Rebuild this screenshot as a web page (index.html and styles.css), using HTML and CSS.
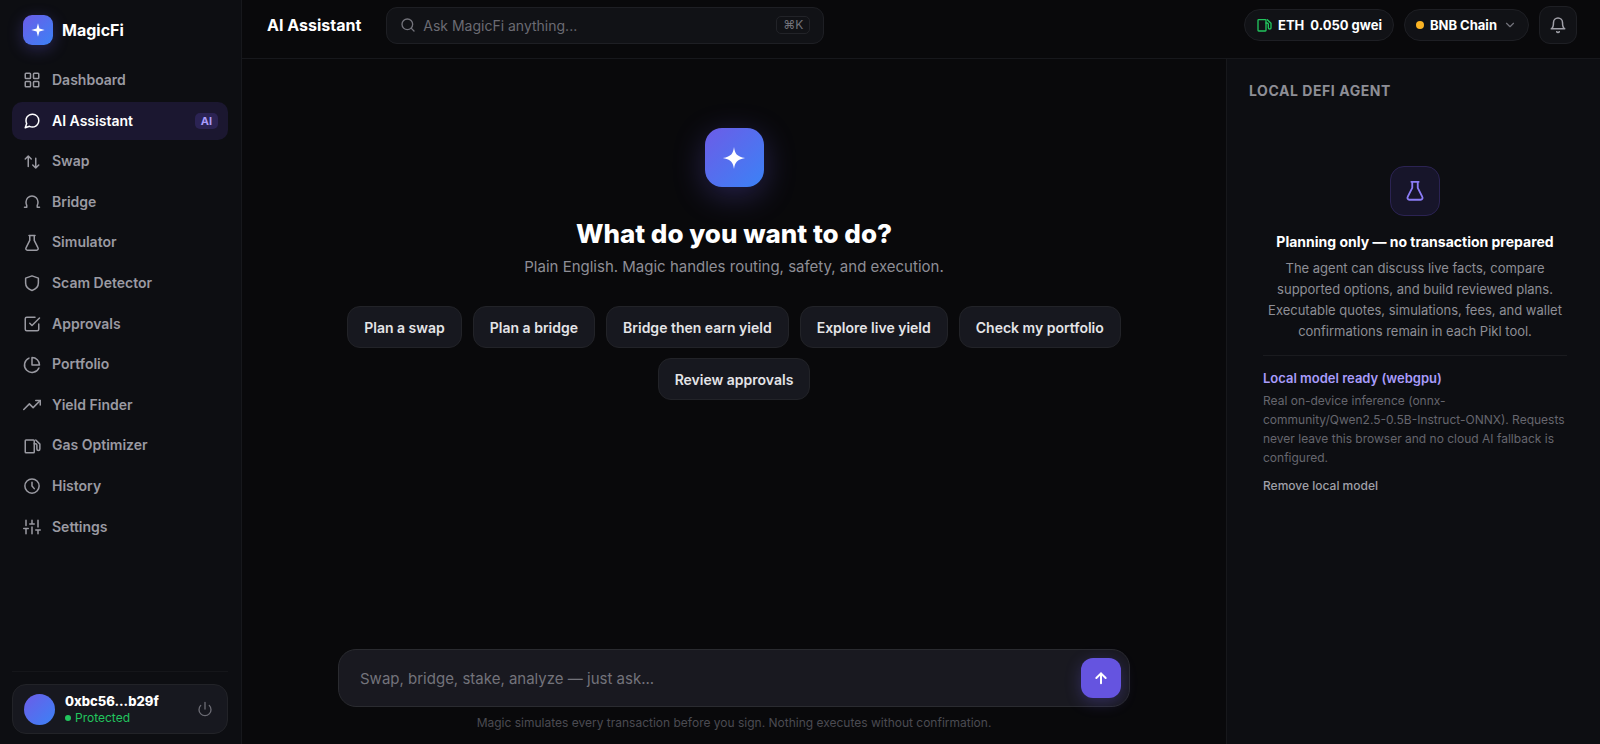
FILE: index.html
```html
<!DOCTYPE html>
<html lang="en">

<head>
    <meta charset="UTF-8">
    <meta name="viewport" content="width=device-width, initial-scale=1.0">
    <title>MagicFi - AI Assistant</title>
    <link rel="stylesheet" href="styles.css">
</head>

<body>
    <div class="app">
        <!-- Sidebar -->
        <aside class="sidebar">
            <a class="brand" href="#">
                <span class="brand-logo">
                    <svg width="16" height="16" viewBox="0 0 24 24" fill="currentColor"><path d="M12 2l2.1 7.9L22 12l-7.9 2.1L12 22l-2.1-7.9L2 12l7.9-2.1z"/></svg>
                </span>
                MagicFi
            </a>

            <nav class="nav">
                <a class="nav-item" href="#">
                    <svg class="icon" viewBox="0 0 24 24"><rect x="3" y="3" width="7" height="7" rx="1"/><rect x="14" y="3" width="7" height="7" rx="1"/><rect x="3" y="14" width="7" height="7" rx="1"/><rect x="14" y="14" width="7" height="7" rx="1"/></svg>
                    Dashboard
                </a>
                <a class="nav-item active" href="#">
                    <svg class="icon" viewBox="0 0 24 24"><path d="M21 11.5a8.4 8.4 0 0 1-.9 3.8 8.5 8.5 0 0 1-7.6 4.7 8.4 8.4 0 0 1-3.8-.9L3 21l1.9-5.7a8.4 8.4 0 0 1-.9-3.8 8.5 8.5 0 0 1 4.7-7.6 8.4 8.4 0 0 1 3.8-.9h.5a8.5 8.5 0 0 1 8 8z"/></svg>
                    AI Assistant
                    <span class="nav-badge">AI</span>
                </a>
                <a class="nav-item" href="#">
                    <svg class="icon" viewBox="0 0 24 24"><path d="M7 18V4M3 8l4-4 4 4M17 7v13M13 16l4 4 4-4"/></svg>
                    Swap
                </a>
                <a class="nav-item" href="#">
                    <svg class="icon" viewBox="0 0 24 24"><path d="M2 19h3v-2.500c-.8-1.500-1-3-1-4.500a8 8 0 0 1 16 0c0 1.500-.2 3-1 4.500V19h3"/></svg>
                    Bridge
                </a>
                <a class="nav-item" href="#">
                    <svg class="icon" viewBox="0 0 24 24"><path d="M9 2v6.500L4 18.500A2 2 0 0 0 5.800 21.500h12.400a2 2 0 0 0 1.800-3L15 8.500V2M8 2h8"/></svg>
                    Simulator
                </a>
                <a class="nav-item" href="#">
                    <svg class="icon" viewBox="0 0 24 24"><path d="M12 2.500l8.500 3v6.500c0 5-3.500 8.300-8.500 10-5-1.700-8.500-5-8.500-10V5.500z"/></svg>
                    Scam Detector
                </a>
                <a class="nav-item" href="#">
                    <svg class="icon" viewBox="0 0 24 24"><path d="M9 11l3 3L22 4"/><path d="M21 12v7a2 2 0 0 1-2 2H5a2 2 0 0 1-2-2V5a2 2 0 0 1 2-2h11"/></svg>
                    Approvals
                </a>
                <a class="nav-item" href="#">
                    <svg class="icon" viewBox="0 0 24 24"><path d="M21.200 15.900A10 10 0 1 1 8 2.800"/><path d="M22 12A10 10 0 0 0 12 2v10z"/></svg>
                    Portfolio
                </a>
                <a class="nav-item" href="#">
                    <svg class="icon" viewBox="0 0 24 24"><path d="M23 6l-9.500 9.500-5-5L1 18"/><path d="M17 6h6v6"/></svg>
                    Yield Finder
                </a>
                <a class="nav-item" href="#">
                    <svg class="icon" viewBox="0 0 24 24"><rect x="3" y="4" width="12" height="17" rx="1"/><path d="M15 9h1.500a2 2 0 0 1 2 2v5a2 2 0 0 0 4 0v-6.500L17 4"/></svg>
                    Gas Optimizer
                </a>
                <a class="nav-item" href="#">
                    <svg class="icon" viewBox="0 0 24 24"><circle cx="12" cy="12" r="9.500"/><path d="M12 7v5l3 3.500"/></svg>
                    History
                </a>
                <a class="nav-item" href="#">
                    <svg class="icon" viewBox="0 0 24 24"><path d="M4 21v-7M4 10V3M12 21v-9M12 8V3M20 21v-5M20 12V3M1 14h6M9 8h6M17 16h6"/></svg>
                    Settings
                </a>
            </nav>

            <!-- Connected wallet -->
            <div class="sidebar-footer">
                <div class="wallet">
                    <span class="avatar"></span>
                    <div class="wallet-info">
                        <div class="wallet-address">0xbc56...b29f</div>
                        <div class="wallet-status"><span class="status-dot"></span>Protected</div>
                    </div>
                    <button class="power-button" type="button" aria-label="Disconnect">
                        <svg class="icon icon-small" viewBox="0 0 24 24"><path d="M18.400 6.600a9 9 0 1 1-12.800 0M12 2v10"/></svg>
                    </button>
                </div>
            </div>
        </aside>

        <div class="main">
            <!-- Top bar -->
            <header class="topbar">
                <h1 class="page-title">AI Assistant</h1>
                <label class="search">
                    <svg class="icon icon-small" viewBox="0 0 24 24"><circle cx="11" cy="11" r="8"/><path d="M21 21l-4.300-4.300"/></svg>
                    <input class="search-input" type="text" placeholder="Ask MagicFi anything..." aria-label="Search">
                    <kbd class="shortcut">⌘K</kbd>
                </label>
                <div class="topbar-actions">
                    <button class="pill" type="button">
                        <svg class="icon icon-small gas-icon" viewBox="0 0 24 24"><rect x="3" y="4" width="12" height="17" rx="1"/><path d="M15 9h1.500a2 2 0 0 1 2 2v5a2 2 0 0 0 4 0v-6.500L17 4"/></svg>
                        <span>ETH</span>
                        <span>0.050 gwei</span>
                    </button>
                    <button class="pill" type="button">
                        <span class="chain-dot"></span>
                        <span>BNB Chain</span>
                        <svg class="icon chevron" viewBox="0 0 24 24"><path d="M6 9l6 6 6-6"/></svg>
                    </button>
                    <button class="bell-button" type="button" aria-label="Notifications">
                        <svg class="icon" viewBox="0 0 24 24"><path d="M18 8.500a6 6 0 0 0-12 0c0 6.500-3 8.500-3 8.500h18s-3-2-3-8.500"/><path d="M13.700 21a2 2 0 0 1-3.400 0"/></svg>
                    </button>
                </div>
            </header>

            <div class="content">
                <!-- Chat -->
                <main class="chat">
                    <section class="hero">
                        <div class="hero-logo">
                            <svg width="28" height="28" viewBox="0 0 24 24" fill="currentColor"><path d="M12 2.500c.8 5.500 2.200 8.200 9.500 9.500-7.300 1.300-8.700 4-9.500 9.500-.8-5.500-2.200-8.200-9.500-9.500 7.300-1.300 8.700-4 9.500-9.500z"/></svg>
                        </div>
                        <h2 class="hero-title">What do you want to do?</h2>
                        <p class="hero-text">Plain English. Magic handles routing, safety, and execution.</p>
                        <div class="chips">
                            <button class="chip" type="button">Plan a swap</button>
                            <button class="chip" type="button">Plan a bridge</button>
                            <button class="chip" type="button">Bridge then earn yield</button>
                            <button class="chip" type="button">Explore live yield</button>
                            <button class="chip" type="button">Check my portfolio</button>
                            <button class="chip" type="button">Review approvals</button>
                        </div>
                    </section>

                    <form class="composer">
                        <input class="composer-input" type="text" placeholder="Swap, bridge, stake, analyze — just ask..." aria-label="Message">
                        <button class="send-button" type="submit" aria-label="Send">
                            <svg class="icon" viewBox="0 0 24 24"><path d="M12 20V5M5 12l7-7 7 7"/></svg>
                        </button>
                    </form>
                    <p class="disclaimer">Magic simulates every transaction before you sign. Nothing executes without confirmation.</p>
                </main>

                <!-- Agent panel -->
                <aside class="panel">
                    <h2 class="panel-title">LOCAL DEFI AGENT</h2>
                    <div class="panel-body">
                        <div class="agent-icon">
                            <svg class="icon" viewBox="0 0 24 24"><path d="M9 2v6.500L4 18.500A2 2 0 0 0 5.800 21.500h12.400a2 2 0 0 0 1.800-3L15 8.500V2M8 2h8"/></svg>
                        </div>
                        <h3 class="agent-title">Planning only — no transaction prepared</h3>
                        <p class="agent-text">The agent can discuss live facts, compare supported options, and build reviewed plans. Executable quotes, simulations, fees, and wallet confirmations remain in each Pikl tool.</p>
                        <div class="model">
                            <h4 class="model-title">Local model ready (webgpu)</h4>
                            <p class="model-text">Real on-device inference (onnx-community/Qwen2.5-0.5B-Instruct-ONNX). Requests never leave this browser and no cloud AI fallback is configured.</p>
                            <button class="remove-button" type="button">Remove local model</button>
                        </div>
                    </div>
                </aside>
            </div>
        </div>
    </div>
</body>

</html>
```

FILE: styles.css
```css
* {
    box-sizing: border-box;
}

body {
    margin: 0;
    background-color: #09090b;
    color: #fff;
    font-family: Inter, "Liberation Sans", sans-serif;
    font-size: 14px;
}

h1, h2, h3, h4, p {
    margin: 0;
}

a {
    color: inherit;
    text-decoration: none;
}

button, input, kbd {
    font-family: inherit;
}

button {
    padding: 0;
    border: none;
    background: none;
    color: inherit;
    cursor: pointer;
}

input {
    min-width: 0;
    padding: 0;
    border: none;
    outline: none;
    background: none;
    color: #fff;
}

.icon {
    flex: none;
    width: 18px;
    height: 18px;
    fill: none;
    stroke: currentColor;
    stroke-width: 2;
    stroke-linecap: round;
    stroke-linejoin: round;
}

.icon-small {
    width: 16px;
    height: 16px;
}

.app {
    display: flex;
    min-height: 100vh;
}

/* Sidebar */
.sidebar {
    display: flex;
    flex-direction: column;
    flex: none;
    width: 242px;
    padding: 15px 13px 10px 12px;
    border-right: 1px solid #17181c;
    background-color: #0d0e12;
}

.brand {
    display: flex;
    align-items: center;
    gap: 9px;
    padding: 0 11px;
    margin-bottom: 16px;
    font-size: 16px;
    font-weight: 700;
}

.brand-logo {
    display: flex;
    align-items: center;
    justify-content: center;
    width: 30px;
    height: 30px;
    border-radius: 9px;
    background: linear-gradient(135deg, #6c5ce7, #3b82f6);
    box-shadow: 0 4px 16px rgba(108, 92, 231, 0.3);
}

.nav {
    display: flex;
    flex-direction: column;
    gap: 2px;
}

.nav-item {
    display: flex;
    align-items: center;
    gap: 11px;
    padding: 10px 10px 10px 11px;
    border-radius: 10px;
    color: #9a9aa2;
    font-size: 14px;
    font-weight: 600;
    line-height: 1.33;
}

.nav-item.active {
    background-color: #1b1730;
    color: #fff;
}

.nav-badge {
    margin-left: auto;
    padding: 0 6px;
    border-radius: 5px;
    background-color: #2b2353;
    color: #a99cfb;
    font-size: 11px;
    font-weight: 700;
    line-height: 16px;
}

.sidebar-footer {
    margin-top: auto;
    padding-top: 12px;
    border-top: 1px solid #15161a;
}

.wallet {
    display: flex;
    align-items: center;
    gap: 10px;
    padding: 7px 10px 7px 11px;
    border: 1px solid #222328;
    border-radius: 14px;
    background-color: #17181f;
}

.avatar {
    width: 31px;
    height: 31px;
    border-radius: 50%;
    background: linear-gradient(135deg, #6c5ce7, #3b82f6);
}

.wallet-info {
    flex: 1;
}

.wallet-address {
    font-size: 13px;
    font-weight: 800;
    line-height: 18px;
}

.wallet-status {
    display: flex;
    align-items: center;
    gap: 4px;
    color: #22c55e;
    font-size: 12px;
    line-height: 16px;
}

.status-dot {
    width: 6px;
    height: 6px;
    border-radius: 50%;
    background-color: #22c55e;
}

.power-button {
    display: flex;
    padding: 4px;
    color: #6b6b73;
}

/* Top bar */
.main {
    display: flex;
    flex-direction: column;
    flex: 1;
    min-width: 0;
}

.topbar {
    display: flex;
    align-items: center;
    gap: 25px;
    padding: 6px 23px 14px 25px;
    border-bottom: 1px solid #17181c;
}

.page-title {
    font-size: 16px;
    font-weight: 700;
}

.search {
    display: flex;
    align-items: center;
    flex: 1;
    gap: 7px;
    max-width: 438px;
    height: 37px;
    padding: 0 13px;
    border: 1px solid #1e1f24;
    border-radius: 11px;
    background-color: #111216;
    color: #73737b;
}

.search-input {
    flex: 1;
    font-size: 14px;
}

.search-input::placeholder {
    color: #6b6b73;
    opacity: 1;
}

.shortcut {
    padding: 0 6px;
    border: 1px solid #222328;
    border-radius: 5px;
    font-size: 12px;
    line-height: 16px;
}

.topbar-actions {
    display: flex;
    align-items: center;
    gap: 10px;
    margin-left: auto;
}

.pill {
    display: flex;
    align-items: center;
    gap: 6px;
    height: 32px;
    padding: 0 11px;
    border: 1px solid #1e1f24;
    border-radius: 16px;
    background-color: #111216;
    font-size: 13px;
    font-weight: 700;
}

.gas-icon {
    color: #22c55e;
}

.chain-dot {
    width: 8px;
    height: 8px;
    border-radius: 50%;
    background-color: #fbb424;
}

.chevron {
    width: 14px;
    height: 14px;
    color: #73737b;
}

.bell-button {
    display: flex;
    align-items: center;
    justify-content: center;
    width: 38px;
    height: 38px;
    border: 1px solid #1e1f24;
    border-radius: 11px;
    background-color: #111216;
    color: #a0a0a8;
}

/* Chat */
.content {
    display: flex;
    flex: 1;
}

.chat {
    display: flex;
    flex-direction: column;
    align-items: center;
    flex: 1;
    min-width: 0;
    padding: 69px 24px 12px;
}

.hero {
    display: flex;
    flex-direction: column;
    align-items: center;
    width: 100%;
    max-width: 792px;
}

.hero-logo {
    display: flex;
    align-items: center;
    justify-content: center;
    width: 59px;
    height: 59px;
    margin-bottom: 30px;
    border-radius: 17px;
    background: linear-gradient(135deg, #6c5ce7, #3b82f6);
    box-shadow: 0 8px 32px rgba(108, 92, 231, 0.3);
}

.hero-title {
    font-size: 26px;
    font-weight: 800;
    line-height: 34px;
}

.hero-text {
    margin-bottom: 23px;
    color: #8e8e96;
    font-size: 15px;
    line-height: 32px;
}

.chips {
    display: flex;
    flex-wrap: wrap;
    justify-content: center;
    gap: 10px 11px;
}

.chip {
    height: 42px;
    padding: 0 16px;
    border: 1px solid #222328;
    border-radius: 13px;
    background-color: #17181f;
    color: #e4e4e7;
    font-size: 14px;
    font-weight: 600;
}

.composer {
    display: flex;
    align-items: center;
    width: 100%;
    max-width: 792px;
    margin-top: auto;
    padding: 8px 8px 8px 21px;
    border: 1px solid #2a2b30;
    border-radius: 18px;
    background-color: #191920;
}

.composer-input {
    flex: 1;
    font-size: 15px;
}

.composer-input::placeholder {
    color: #73737b;
    opacity: 1;
}

.send-button {
    display: flex;
    align-items: center;
    justify-content: center;
    width: 40px;
    height: 40px;
    border-radius: 12px;
    background-color: #6554e0;
    box-shadow: 0 4px 16px rgba(108, 92, 231, 0.3);
}

.send-button .icon {
    width: 16px;
    height: 16px;
    stroke-width: 3;
}

.disclaimer {
    margin-top: 7px;
    color: #4b4b52;
    font-size: 12px;
    line-height: 18px;
}

/* Agent panel */
.panel {
    flex: none;
    width: 374px;
    padding: 23px 19px 23px 22px;
    border-left: 1px solid #17181c;
    background-color: #0d0e12;
}

.panel-title {
    color: #8e8e96;
    font-size: 14px;
    font-weight: 700;
    letter-spacing: 0.04em;
    line-height: 18px;
}

.panel-body {
    display: flex;
    flex-direction: column;
    align-items: center;
    padding: 66px 14px 0;
}

.agent-icon {
    display: flex;
    align-items: center;
    justify-content: center;
    width: 50px;
    height: 50px;
    margin-bottom: 16px;
    border: 1px solid #2b2353;
    border-radius: 14px;
    background-color: #17152a;
    color: #8b7cf6;
}

.agent-icon .icon {
    width: 22px;
    height: 22px;
}

.agent-title {
    margin-bottom: 6px;
    font-size: 14px;
    font-weight: 700;
    line-height: 20px;
}

.agent-text {
    color: #8e8e96;
    font-size: 13px;
    line-height: 21px;
    text-align: center;
}

.model {
    width: 100%;
    margin-top: 13px;
    padding-top: 13px;
    border-top: 1px solid #1a1b1f;
}

.model-title {
    margin-bottom: 3px;
    color: #a99cfb;
    font-size: 13px;
    font-weight: 600;
    line-height: 19px;
}

.model-text {
    margin-bottom: 9px;
    color: #66666e;
    font-size: 12px;
    line-height: 19px;
}

.remove-button {
    color: #a0a0a8;
    font-size: 12px;
    font-weight: 500;
    line-height: 19px;
}
```
